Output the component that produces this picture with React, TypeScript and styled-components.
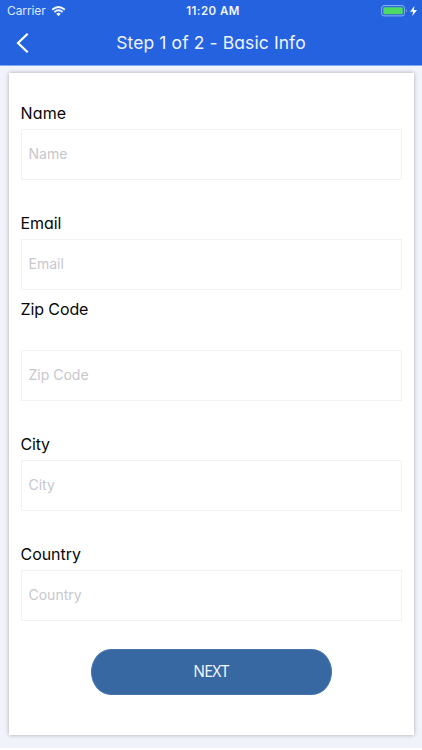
import React from 'react';
import styled, { createGlobalStyle } from 'styled-components';

const Global = createGlobalStyle`
  * { box-sizing: border-box; }
  body { margin: 0; background: #fff; font-family: Inter, "Noto Sans", sans-serif; }
`;

const Screen = styled.main`
  height: 748px;
  background: #f0f3f9;
  display: flex;
  flex-direction: column;
  overflow: hidden;
`;

const Header = styled.header`
  height: 66px;
  flex: none;
  background: #2562df;
  border-bottom: 1px solid #80a9f3;
  color: #fff;
`;

const StatusBar = styled.div`
  height: 22px;
  display: grid;
  grid-template-columns: 1fr auto 1fr;
  align-items: center;
  padding: 0 5px 0 7px;
`;

const StatusGroup = styled.div<{ $end?: boolean }>`
  display: flex;
  align-items: center;
  justify-content: ${(p) => (p.$end ? 'flex-end' : 'flex-start')};
  gap: ${(p) => (p.$end ? 2 : 5)}px;
`;

const Carrier = styled.span`
  font-size: 12px;
  line-height: 22px;
  letter-spacing: -0.1px;
  color: #dfe9ff;
`;

const Clock = styled.span`
  font-size: 11.5px;
  font-weight: 600;
  line-height: 22px;
  letter-spacing: 0.45px;
  padding-left: 2px;
  color: #f0f5ff;
`;

const NavBar = styled.div`
  height: 41px;
  display: grid;
  grid-template-columns: 46px 1fr 46px;
  align-items: center;
`;

const BackButton = styled.button`
  border: 0;
  padding: 0 0 0 16px;
  background: none;
  display: flex;
`;

const Title = styled.h1`
  margin: 0;
  text-align: center;
  font-size: 17.5px;
  font-weight: 400;
  line-height: 40px;
  letter-spacing: 0.1px;
  white-space: nowrap;
  font-feature-settings: "cv11";
  color: #edf3ff;
`;

const Card = styled.form`
  margin: 7px 8.5px 0;
  height: 662px;
  padding: 28px 12px 0;
  background: #fff;
  box-shadow: 0 0 4px rgba(0, 0, 0, 0.3);
`;

const Field = styled.div`
  height: 110.3px;
  display: flex;
  flex-direction: column;
`;

const Label = styled.label<{ $raised?: boolean; $spacing: number }>`
  flex: none;
  height: 28px;
  line-height: 24px;
  font-size: 16px;
  font-feature-settings: "cv11";
  letter-spacing: ${(p) => p.$spacing}px;
  color: #080808;
  margin-top: ${(p) => (p.$raised ? -25 : 0)}px;
  margin-bottom: ${(p) => (p.$raised ? 25 : 0)}px;
`;

const Input = styled.input`
  flex: none;
  width: 100%;
  height: 51px;
  border: 1px solid #f2f3f5;
  border-radius: 0;
  padding: 0 7px 2px;
  background: #fff;
  font: 400 14px Inter, sans-serif;
  outline: none;
  &::placeholder { color: #c7c7cd; opacity: 1; }
`;

const NextButton = styled.button`
  display: block;
  width: 241px;
  height: 46px;
  margin: -3px auto 0;
  border: 1px solid #4775ae;
  border-radius: 20px / 23px;
  background: #3868a2;
  color: #f1f6ff;
  font: 400 15.5px "Noto Sans", sans-serif;
  letter-spacing: -0.6px;
  padding: 0 0 2px;
`;

const fields = [
  { name: 'Name', spacing: 0.15 },
  { name: 'Email', spacing: -0.05 },
  { name: 'Zip Code', spacing: -0.1, raised: true },
  { name: 'City', spacing: -0.2 },
  { name: 'Country', spacing: -0.05 },
];

const WifiIcon = () => (
  <svg width="15" height="11" viewBox="0 0 14 11" fill="none" stroke="#f2f6ff" strokeWidth="1.9">
    <path d="M.7 3.8Q7-1.8 13.3 3.8M2.9 6.1Q7 2.6 11.1 6.1" />
    <path d="M4.7 7.8Q7 5.9 9.3 7.8L7 10.3Z" fill="#f2f6ff" stroke="none" />
  </svg>
);

const BatteryIcon = () => (
  <svg width="27" height="12" viewBox="0 0 27 12">
    <rect x=".6" y=".6" width="22.8" height="10.3" rx="2.4" fill="none" stroke="#8fb2f5" />
    <rect x="2.3" y="2.2" width="19.5" height="7.1" rx="1" fill="#4cd964" />
    <path d="M25 4Q26.7 5.7 25 7.5Z" fill="#8fb2f5" />
  </svg>
);

const BoltIcon = () => (
  <svg width="7" height="10" viewBox="0 0 6 10" preserveAspectRatio="none">
    <path d="M3.8 0L0 5.7H2.6L2 10L6 4.1H3.3Z" fill="#fff" />
  </svg>
);

const BackIcon = () => (
  <svg width="13" height="20" viewBox="0 0 13 20" fill="none" stroke="#fff" strokeWidth="2.2">
    <path d="M11.7 .8L2 10L11.7 19.2" />
  </svg>
);

export default function App() {
  return (
    <>
      <Global />
      <Screen>
        <Header>
          <StatusBar>
            <StatusGroup>
              <Carrier>Carrier</Carrier>
              <WifiIcon />
            </StatusGroup>
            <Clock>11:20 AM</Clock>
            <StatusGroup $end>
              <BatteryIcon />
              <BoltIcon />
            </StatusGroup>
          </StatusBar>
          <NavBar>
            <BackButton type="button" aria-label="Back"><BackIcon /></BackButton>
            <Title>Step 1 of 2 - Basic Info</Title>
          </NavBar>
        </Header>
        <Card>
          {fields.map((f) => (
            <Field key={f.name}>
              <Label htmlFor={f.name} $raised={f.raised} $spacing={f.spacing}>{f.name}</Label>
              <Input id={f.name} placeholder={f.name} />
            </Field>
          ))}
          <NextButton type="button">NEXT</NextButton>
        </Card>
      </Screen>
    </>
  );
}
